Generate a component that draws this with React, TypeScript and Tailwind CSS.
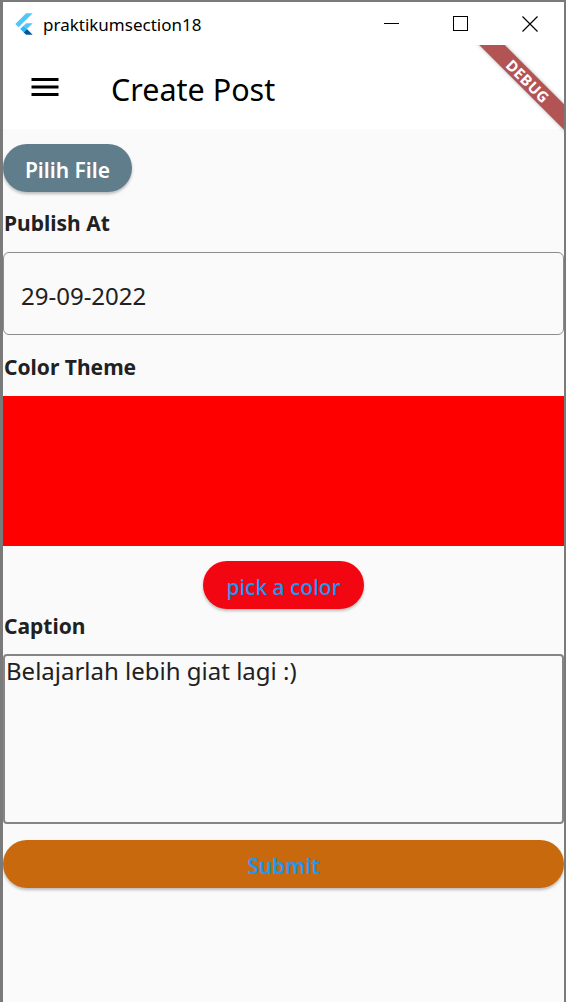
import React from "react";

function FlutterLogo() {
  return (
    <svg viewBox="0 0 166 202" className="w-[20px] h-[24px]">
      <path fill="#54C5F8" d="M37.7 128.9 9.8 101 100.4 10.4h55.8z" />
      <path fill="#54C5F8" d="M156.2 94.1h-55.8L79.5 115l27.9 27.9z" />
      <path fill="#01579B" d="M79.5 170.7l20.9 20.9h55.8l-48.8-48.8z" />
      <path fill="#29B6F6" d="M79.5 115 51.6 142.9 79.5 170.7l27.9-27.8z" />
    </svg>
  );
}

export default function App() {
  return (
    <div className="w-[566px] h-[1002px] flex flex-col border-l-[3px] border-t-2 border-r-2 border-[#7a7a7a] bg-[#fafafa] overflow-hidden font-['Noto_Sans',sans-serif] text-[#212121]">
      {/* Title bar */}
      <div className="h-[43px] shrink-0 bg-white flex items-center">
        <div className="ml-[11px] mt-[1px] flex items-center">
          <FlutterLogo />
        </div>
        <span className="ml-[9px] text-[17px] text-black leading-none pt-[1px]">praktikumsection18</span>
        <div className="ml-auto flex h-full">
          <div className="w-[69px] h-full flex items-center justify-center">
            <div className="w-[15px] h-[1px] bg-black" />
          </div>
          <div className="w-[69px] h-full flex items-center justify-center">
            <div className="w-[15px] h-[15px] border border-black" />
          </div>
          <div className="w-[69px] h-full flex items-center justify-center">
            <svg width="16" height="16" viewBox="0 0 16 16">
              <path d="M0.5 0.5 15.5 15.5M15.5 0.5 0.5 15.5" stroke="#000" strokeWidth="1.2" fill="none" />
            </svg>
          </div>
        </div>
      </div>

      {/* App area */}
      <div className="relative flex-1 flex flex-col overflow-hidden">
        {/* App bar */}
        <div className="h-[84px] shrink-0 bg-white flex items-center">
          <div className="w-[84px] flex justify-center">
            <svg width="36" height="36" viewBox="0 0 36 36">
              <rect x="4.5" y="9" width="27" height="3" fill="#000" />
              <rect x="4.5" y="16.5" width="27" height="3" fill="#000" />
              <rect x="4.5" y="24" width="27" height="3" fill="#000" />
            </svg>
          </div>
          <span className="ml-[24px] pt-[5px] text-[30.5px] text-black leading-none">Create Post</span>
        </div>

        {/* Body */}
        <div className="flex flex-col">
          <button className="mt-[15px] w-[129px] h-[48px] pt-[4px] rounded-full bg-[#607d8b] text-white text-[21px] font-semibold shadow-[0_2px_3px_rgba(0,0,0,0.25)] flex items-center justify-center leading-none">
            Pilih File
          </button>

          <div className="h-[60px] flex items-center pl-[1px] pt-[2px] text-[21px] font-bold leading-none">Publish At</div>

          <div className="h-[83px] border border-[#8c8c8c] rounded-[6px] flex items-center pl-[17px] pt-[4px] text-[24px] leading-none">
            29-09-2022
          </div>

          <div className="h-[61px] flex items-center pl-[1px] pt-[3px] text-[21px] font-bold leading-none">Color Theme</div>

          <div className="h-[150px] bg-[#ff0000]" />

          <div className="flex justify-center mt-[15px]">
            <button className="w-[161px] h-[48px] pt-[4px] rounded-full bg-[#f20612] text-[#2196f3] text-[21px] font-medium shadow-[0_2px_3px_rgba(0,0,0,0.25)] flex items-center justify-center leading-none">
              pick a color
            </button>
          </div>

          <div className="h-[45px] pb-[10px] flex items-center pl-[1px] text-[21px] font-bold leading-none">Caption</div>

          <div className="h-[170px] border-2 border-[#858585] rounded-[4px] px-[1px] pt-[1px] text-[24px] leading-[28px]">
            Belajarlah lebih giat lagi :)
          </div>

          <button className="mt-[16px] w-full h-[48px] pt-[4px] rounded-full bg-[#c9690e] text-[#2196f3] text-[21px] font-semibold shadow-[0_2px_3px_rgba(0,0,0,0.25)] flex items-center justify-center leading-none">
            Submit
          </button>
        </div>

        {/* Debug banner */}
        <div className="absolute left-[445px] top-[27px] w-[160px] h-[18px] rotate-45 bg-[#b35454] shadow-[0_0_4px_rgba(0,0,0,0.3)] flex items-center justify-center">
          <span className="text-white text-[15px] font-bold leading-none tracking-[0.5px] pt-[1px]">DEBUG</span>
        </div>
      </div>
    </div>
  );
}
